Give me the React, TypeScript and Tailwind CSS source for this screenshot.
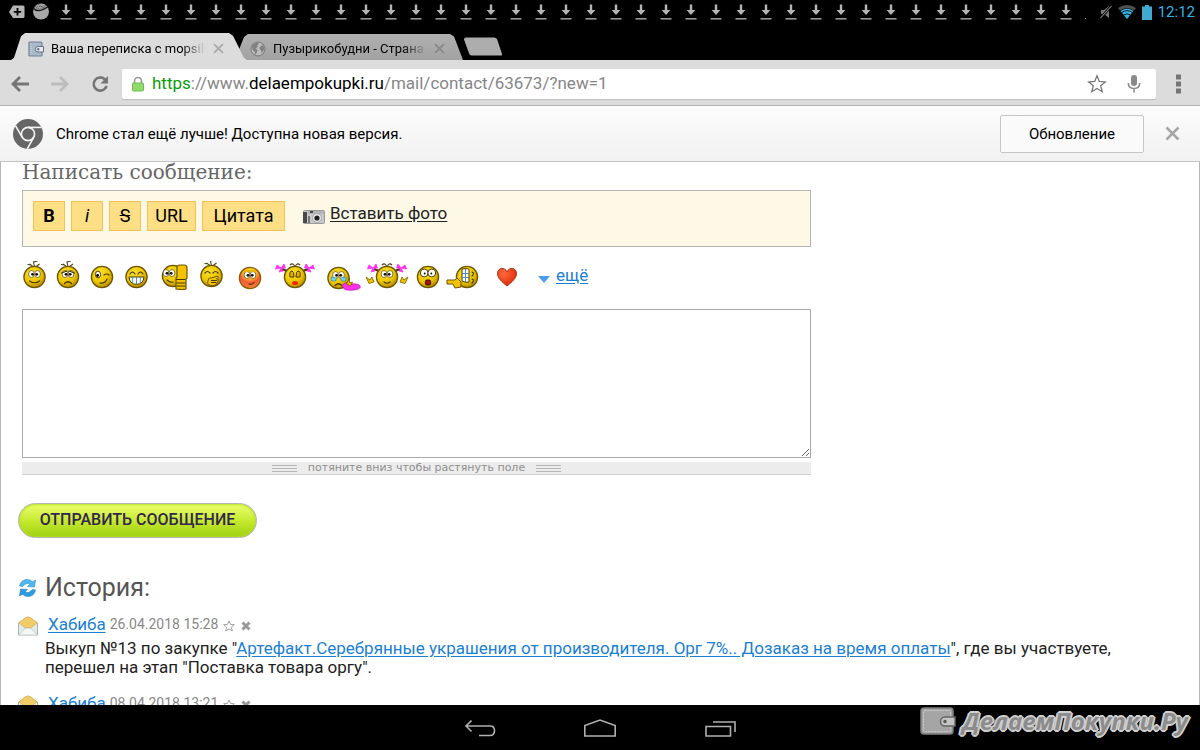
import React from "react";

const BackIcon = ({ flip }: { flip?: boolean }) => (
  <svg width="20" height="20" viewBox="0 0 20 20" className={flip ? "rotate-180" : ""}>
    <path d="M10 3 L3 10 L10 17 M3 10 H19" fill="none" stroke="currentColor" strokeWidth="2.8" />
  </svg>
);

const ReloadIcon = () => (
  <svg width="20" height="20" viewBox="0 0 20 20">
    <path d="M15.2 5.6 A6.6 6.6 0 1 0 16.6 12" fill="none" stroke="#757575" strokeWidth="2.6" />
    <path d="M18 2 V9.5 H10.5 Z" fill="#757575" />
  </svg>
);

const CloseIcon = ({ size, color }: { size: number; color: string }) => (
  <svg width={size} height={size} viewBox="0 0 10 10">
    <path d="M1 1 L9 9 M9 1 L1 9" stroke={color} strokeWidth="1.7" />
  </svg>
);

const DownloadIcon = () => (
  <svg width="25" height="24" viewBox="0 0 25 24" className="shrink-0">
    <path d="M10.8 4.4 H13.2 V10 H16.4 L12 15 L7.6 10 H10.8 Z" fill="#b5b5b5" />
    <path d="M6.5 18.8 H17.5" stroke="#a0a0a0" strokeWidth="1.5" />
  </svg>
);

const WalletIcon = () => (
  <svg width="16" height="16" viewBox="0 0 16 16">
    <path d="M1 2 Q1 1 2 1 H13 Q14 1 14 2 V14 Q14 15 13 15 H2 Q1 15 1 14 Z" fill="#a9b9c8" stroke="#6f8295" strokeWidth="1.2" />
    <path d="M3 3 V13" stroke="#d3dde6" strokeDasharray="1 1" />
    <path d="M15.5 5.5 H10 A2.7 2.7 0 0 0 10 11 H15.5 Z" fill="#e6ebf0" stroke="#5f7285" />
    <circle cx="10.2" cy="8.2" r="1.2" fill="#5f7285" />
  </svg>
);

const GlobeIcon = () => (
  <svg width="16" height="16" viewBox="0 0 16 16">
    <circle cx="8" cy="8" r="7" fill="#bcbcbc" stroke="#777" strokeWidth="1" />
    <path d="M2 5 Q4 2 8 1.5 L9 3 L7 4 L8 5.5 L5.5 7.5 L7.5 9 L7 11 L5.5 14 L4.5 10.5 L2.5 8.5 Z" fill="#808080" />
    <path d="M11 3 L14 5.5 L14.5 8 L13 10.5 L11.5 12 L11 9 L9.5 8 L10 5.5 L12 5 Z" fill="#808080" />
  </svg>
);

const ChromeIcon = () => (
  <svg width="30" height="30" viewBox="0 0 30 30">
    <circle cx="15" cy="15" r="15" fill="#666" />
    <g fill="none" stroke="#f5f5f5" strokeWidth="1.6">
      <circle cx="15" cy="15" r="6.6" />
      <path d="M15 8.4 H28.6" />
      <path d="M9.3 18.3 L2.6 6.8" />
      <path d="M20.7 18.3 L14.2 30" />
    </g>
  </svg>
);

const CameraIcon = () => (
  <svg width="22" height="16" viewBox="0 0 22 16">
    <rect x="0.5" y="1.5" width="21" height="13" rx="1" fill="#c9c9c9" stroke="#9a9a9a" />
    <rect x="0" y="3" width="4" height="11" fill="#4a4a4a" />
    <rect x="5" y="2" width="16" height="3" fill="#b5b5b5" />
    <rect x="7" y="2" width="3" height="2" fill="#444" />
    <rect x="5" y="7" width="2" height="7" fill="#777" />
    <circle cx="14" cy="9" r="4.4" fill="#ededed" stroke="#aaa" />
    <circle cx="14" cy="9" r="2.6" fill="#222" />
  </svg>
);

const Hair = () => (
  <path d="M-1 -10 L-5 -13 M0 -10 L-1 -15 L3 -16 M1 -10 L5 -13 M-7 -12.5 L-3 -12" fill="none" stroke="#4a4020" strokeWidth="1.1" />
);

const Face = ({ y = 0 }: { y?: number }) => (
  <circle cx="0" cy={y} r="10.6" fill="url(#face)" stroke="#6d5600" strokeWidth="1.3" />
);

const Eyes = ({ y = -3 }: { y?: number }) => (
  <g>
    <ellipse cx="-3" cy={y} rx="2.9" ry="3.5" fill="#fff" stroke="#6b5a20" strokeWidth="0.8" />
    <ellipse cx="3" cy={y} rx="2.9" ry="3.5" fill="#fff" stroke="#6b5a20" strokeWidth="0.8" />
    <circle cx="-2" cy={y + 0.3} r="1.4" fill="#111" />
    <circle cx="2.2" cy={y + 0.3} r="1.4" fill="#111" />
  </g>
);

const Bows = () => (
  <g>
    <path d="M-8 -6 L-13 -8 M8 -6 L13 -8" stroke="#4a3210" strokeWidth="2.4" />
    <path d="M-14 -9 L-18 -12 L-19.5 -8 Z M-14 -9 L-11 -13 L-9.5 -9 Z M-14 -9 L-16 -5 L-12 -6 Z M14 -9 L18 -12 L19.5 -8 Z M14 -9 L11 -13 L9.5 -9 Z M14 -9 L16 -5 L12 -6 Z" fill="#ff30f0" stroke="#ff30f0" strokeWidth="0.8" />
    <path d="M-5 -12 Q-2 -15 0 -10 Q2 -15 5 -12" fill="none" stroke="#4a3a18" strokeWidth="1.2" />
  </g>
);

const line = { fill: "none", stroke: "#4a3a00", strokeWidth: 1.2, strokeLinecap: "round" as const };

const smileys = [
  {
    name: "улыбка",
    width: 33,
    art: (<><Hair /><Face /><Eyes /><path d="M-5 4 Q0 7.5 5 4" {...line} /></>),
  },
  {
    name: "грусть",
    width: 34,
    art: (<><Hair /><Face /><Eyes /><path d="M-6.5 -4 L-1 -6 M6.5 -4 L1 -6" {...line} /><path d="M-3.5 6.5 Q0 3 3.5 6.5" {...line} /></>),
  },
  {
    name: "подмигивание",
    width: 34,
    art: (
      <>
        <Face />
        <ellipse cx="-4" cy="-2.5" rx="2.6" ry="3.4" fill="#fff" stroke="#554400" />
        <circle cx="-4.4" cy="-1.5" r="1.4" />
        <path d="M2 -2 Q5 -4 7 -2 M-2 6 Q3 7 5 2" {...line} />
      </>
    ),
  },
  {
    name: "смех",
    width: 35,
    art: (
      <>
        <Face />
        <path d="M-6.5 -3 Q-4 -7 -1.5 -3 M1.5 -3 Q4 -7 6.5 -3" {...line} />
        <path d="M-7.5 0 H7.5 Q7 7 0 7.4 Q-7 7 -7.5 0 Z" fill="#fff" stroke="#4a3a00" />
        <path d="M-3.8 0 V6.5 M0 0 V7 M3.8 0 V6.5" stroke="#3c83b8" strokeWidth="0.9" />
      </>
    ),
  },
  {
    name: "класс",
    width: 40,
    art: (
      <>
        <g transform="translate(-1 -1)"><Face /><g transform="translate(-4 0)"><Eyes /></g><path d="M-6 4 Q-3 7 0 6" {...line} /></g>
        <path d="M3 -10 Q3 -12 6 -12 H10 Q13 -12 13 -9 V1 L12 2 V12 Q8 13 2 12 V1 L3 0 Z" fill="#f3c200" stroke="#6d5600" strokeWidth="1.2" />
        <path d="M2.5 2.5 H11 M3 6 H11 M3 9 H11" {...line} />
      </>
    ),
  },
  {
    name: "хихиканье",
    width: 35,
    art: (
      <>
        <g transform="translate(0 -1)"><Hair /><Face /></g>
        <path d="M-6.5 -4 Q-4 -7 -1.5 -4 M1.5 -4 Q4 -7 6.5 -4" {...line} />
        <path d="M-3 2 Q-2 0 0 1 L6 -1 Q8 0 5 2 L7 2.5 L6 5 L4 8 Q-2 10 -4 6 Z" fill="#f3c200" stroke="#6d5600" />
        <path d="M0 3.5 H5 M0 5.5 H4" {...line} />
      </>
    ),
  },
  {
    name: "смущение",
    width: 42,
    art: (
      <>
        <circle cx="0" cy="1" r="10.6" fill="url(#blush)" stroke="#8a5a00" strokeWidth="1.3" />
        <Eyes y={-2} />
        <path d="M-6 -5.5 Q0 -7 6 -5.5" fill="none" stroke="#e8b400" strokeWidth="1.8" />
        <path d="M-1 7 Q2 8 4 5.5" {...line} />
      </>
    ),
  },
  {
    name: "поцелуй",
    width: 48,
    art: (
      <>
        <Bows />
        <Face />
        <path d="M-5 0 Q-6 -6 -3 -6 Q-1 -6 -1 0 Z M1 0 Q1 -6 3 -6 Q6 -6 5 0 Z" fill="#e0ad00" stroke="#4a3a00" />
        <ellipse cx="0" cy="6" rx="3" ry="2.1" fill="#ff2200" />
      </>
    ),
  },
  {
    name: "плач",
    width: 45,
    art: (
      <>
        <g transform="translate(-3 1)">
          <Face />
          <Eyes />
          <path d="M-7.5 -1 L-7 3 L-3 3 L-2 0 L-4.5 -0.5 Z M2 0 L3 3 L7 3 L7.5 -1 L4.5 -0.5 Z" fill="#6fd3f5" stroke="#3a7f98" strokeWidth="0.6" />
          <path d="M-3.5 7.5 Q0 4 3.5 7.5" {...line} />
        </g>
        <path d="M1 8 Q5 4 9 7 Q18 6 19 10 Q17 14 5 13 Q1 12 1 8 Z" fill="#ff30e8" stroke="#c010b8" strokeWidth="0.7" />
        <path d="M5 7 L8 1 L8 6 L11 5 L9 9 Z" fill="#f3c200" stroke="#6d5600" strokeWidth="0.8" />
      </>
    ),
  },
  {
    name: "девочка",
    width: 46,
    art: (
      <>
        <Bows />
        <Face />
        <Eyes />
        <path d="M-3 5 Q0 7.5 3 5" {...line} />
        <path d="M-21 0 L-17 3 L-15 0 L-13 5 L-18 6.5 Z M21 0 L17 3 L15 0 L13 5 L18 6.5 Z" fill="#f3c200" stroke="#8d6c00" strokeWidth="0.9" />
      </>
    ),
  },
  {
    name: "шок",
    width: 36,
    art: (
      <>
        <Face />
        <circle cx="-3.8" cy="-4" r="3.9" fill="#fff" stroke="#554400" />
        <circle cx="3.8" cy="-4" r="3.9" fill="#fff" stroke="#554400" />
        <circle cx="-3.3" cy="-3.5" r="0.9" />
        <circle cx="3.3" cy="-3.5" r="0.9" />
        <rect x="-2.6" y="3" width="5.2" height="5" rx="1.5" fill="#a31200" stroke="#3c1000" />
      </>
    ),
  },
  {
    name: "хохот",
    width: 34,
    art: (
      <>
        <g transform="translate(4 0)">
          <Face />
          <path d="M-5 -8 Q2 -9 2 -7 V5 Q-1 6 -5 4 Z" fill="#fff" stroke="#4a3a00" />
          <path d="M-5 -3.5 H2 M-5 0.5 H2 M-1.5 -8 V5" stroke="#3c83b8" strokeWidth="0.9" />
          <path d="M5 -5 Q8 -4 5 -1 M5 2 Q8 3 5 6" {...line} />
        </g>
        <path d="M-16 3 H-8 L-6 1 L-2 5 V10 L-8 11 L-10 7 H-16 Z" fill="#f3c200" stroke="#6d5600" />
      </>
    ),
  },
  {
    name: "сердце",
    width: 54,
    art: (
      <path d="M0 9 C-5 5 -9.5 1 -9.5 -3.5 C-9.5 -9.5 -2 -10.5 0 -5 C2 -10.5 9.5 -9.5 9.5 -3.5 C9.5 1 5 5 0 9 Z" fill="url(#heart)" stroke="#a3341a" strokeWidth="1" />
    ),
  },
];

const messages = [
  {
    author: "Хабиба",
    date: "26.04.2018 15:28",
    before: 'Выкуп №13 по закупке "',
    link: "Артефакт.Серебрянные украшения от производителя. Орг 7%.. Дозаказ на время оплаты",
    after: '", где вы участвуете, перешел на этап "Поставка товара оргу".',
  },
  { author: "Хабиба", date: "08.04.2018 13:21", before: "", link: "", after: "" },
];

const StatusBar = () => (
  <div className="flex h-6 shrink-0 items-center justify-between bg-black pr-[5px]">
    <div className="flex min-w-0 flex-1 overflow-hidden pl-1">
      <svg width="25" height="24" viewBox="0 0 25 24" className="shrink-0">
        <path d="M5 12 L9 5.5 H19 Q20.5 5.5 20.5 7 V16.5 Q20.5 18 19 18 H9 Z" fill="#b5b5b5" />
        <path d="M13.5 8 V15.5 M9.8 11.8 H17.2" stroke="#000" strokeWidth="1.8" />
      </svg>
      <svg width="25" height="24" viewBox="0 0 25 24" className="shrink-0">
        <circle cx="12" cy="11.5" r="8" fill="#a8a8a8" />
        <path d="M4 8 Q9 14 20 6" fill="none" stroke="#111" strokeWidth="1.3" />
        <path d="M6 5 Q11 8 18 5 M5 7 Q11 10 19 6 M9 4 L16 9 M6 6 L12 11" stroke="#333" fill="none" strokeWidth="0.8" strokeDasharray="1 1" />
      </svg>
      {Array.from({ length: 41 }, (_, i) => (
        <DownloadIcon key={i} />
      ))}
      <svg width="12" height="24" viewBox="0 0 12 24" className="shrink-0">
        <rect x="6" y="18" width="1" height="1" fill="#888" />
      </svg>
    </div>
    <div className="flex shrink-0 items-center gap-[6px]">
      <svg width="12" height="16" viewBox="0 0 12 16">
        <path d="M1 6 H4 L9 2 V14 L4 10 H1 Z" fill="#777" />
        <path d="M0 15 L12 1" stroke="#000" strokeWidth="2.6" />
        <path d="M0.5 14 L11.5 2" stroke="#8a8a8a" strokeWidth="1.1" />
      </svg>
      <svg width="18" height="14" viewBox="0 0 18 14">
        <path d="M0 3 Q9 -3 18 3 L16 5.5 Q9 1 2 5.5 Z" fill="#505050" />
        <path d="M2.6 6 Q9 1.5 15.4 6 L9 14 Z" fill="#33b5e5" />
        <path d="M3.5 7.6 Q9 3.8 14.5 7.6 M5.5 10 Q9 7.6 12.5 10" fill="none" stroke="#000" strokeWidth="0.9" />
      </svg>
      <svg width="10" height="15" viewBox="0 0 10 15">
        <path d="M3 0 H7 V1.5 H10 V15 H0 V1.5 H3 Z" fill="#3fa9d0" />
      </svg>
      <span className="text-[15px] leading-6 text-[#33b5e5]">12:12</span>
    </div>
  </div>
);

const TabStrip = () => (
  <div className="flex h-9 shrink-0 items-end bg-black pl-[11px]">
    <div className="z-10 flex h-[27px] w-[236px] items-center bg-[#dcdcdc] pl-[17px] pr-[23px] pt-1 [clip-path:polygon(0_100%,3px_92%,10px_12%,14px_0,218px_0,222px_10%,233px_92%,100%_100%)]">
      <WalletIcon />
      <span className="ml-[7px] flex-1 overflow-hidden whitespace-nowrap text-[13px] text-black [mask-image:linear-gradient(to_right,black_85%,transparent)]">
        Ваша переписка с mopsil
      </span>
      <button aria-label="Закрыть вкладку" className="ml-2">
        <CloseIcon size={11} color="#aaa" />
      </button>
    </div>
    <div className="-ml-3 flex h-[26px] w-[228px] items-center bg-linear-to-b from-[#b0b0b0] to-[#a2a2a2] pl-[15px] pr-[18px] pt-[3px] [clip-path:polygon(0_100%,9px_12%,13px_0,215px_0,219px_10%,100%_100%)]">
      <GlobeIcon />
      <span className="ml-[7px] flex-1 overflow-hidden whitespace-nowrap text-[13px] text-black [mask-image:linear-gradient(to_right,black_85%,transparent)]">
        Пузырикобудни - Страна
      </span>
      <button aria-label="Закрыть вкладку" className="ml-2">
        <CloseIcon size={11} color="#888" />
      </button>
    </div>
    <button aria-label="Новая вкладка" className="mb-1">
      <svg width="40" height="19" viewBox="0 0 40 19">
        <path d="M3 0.5 H31 Q33 0.5 34 2 L39 17 Q39.5 18.5 38 18.5 H9 Q7 18.5 6.3 17 L1 2.5 Q1 0.5 3 0.5 Z" fill="#adadad" />
      </svg>
    </button>
  </div>
);

const AddressBar = () => (
  <div className="flex h-[46px] shrink-0 items-center border-b border-[#b4b4b4] bg-[#dcdcdc] pl-[10px] pr-3 pt-[2px]">
    <button aria-label="Назад" className="text-[#757575]">
      <BackIcon />
    </button>
    <button aria-label="Вперёд" className="ml-5 text-[#bdbdbd]">
      <BackIcon flip />
    </button>
    <button aria-label="Обновить" className="ml-5">
      <ReloadIcon />
    </button>
    <div className="ml-3 flex h-[30px] flex-1 items-center rounded-xs bg-white pl-[10px] pr-3 shadow-[0_1px_1px_#bbb]">
      <svg width="12" height="16" viewBox="0 0 12 16">
        <path d="M2.5 8 V5 A3.5 3.5 0 0 1 9.5 5 V8" fill="none" stroke="#9a9a9a" strokeWidth="1.7" />
        <rect x="0.5" y="7" width="11" height="8" rx="1" fill="#8fdb6c" stroke="#70bb54" />
      </svg>
      <a href="#" className="ml-2 flex-1 truncate text-[17px] text-[#868686]">
        <span className="text-[#0b9a0b]">https</span>://www.<span className="text-black">delaempokupki.ru</span>/mail/contact/63673/?new=1
      </a>
      <button aria-label="В закладки">
        <svg width="20" height="20" viewBox="0 0 20 20">
          <path d="M10 1.8 L12.3 7.4 L18.3 7.9 L13.7 11.8 L15.2 17.7 L10 14.5 L4.8 17.7 L6.3 11.8 L1.7 7.9 L7.7 7.4 Z" fill="none" stroke="#757575" strokeWidth="1.3" />
        </svg>
      </button>
      <button aria-label="Голосовой поиск" className="ml-[17px]">
        <svg width="20" height="20" viewBox="0 0 20 20">
          <rect x="7" y="1" width="6" height="11" rx="3" fill="#8a8a8a" />
          <path d="M4.3 9 Q4.3 14.5 10 14.5 Q15.7 14.5 15.7 9 M10 14.5 V18.5" fill="none" stroke="#8a8a8a" strokeWidth="1.5" />
        </svg>
      </button>
    </div>
    <button aria-label="Меню" className="ml-[14px]">
      <svg width="18" height="20" viewBox="0 0 18 20">
        <path d="M6 0.5 h5 v5 h-5 Z M6 7.5 h5 v5 h-5 Z M6 14.5 h5 v5 h-5 Z" fill="#757575" />
      </svg>
    </button>
  </div>
);

const UpdateBar = () => (
  <div className="flex h-14 shrink-0 items-center border-b border-[#c4c4c4] bg-linear-to-b from-[#fcfcfc] to-[#f1f1f1] pl-[13px] pr-5">
    <ChromeIcon />
    <span className="ml-[13px] flex-1 pt-[2px] text-[15px] text-black">Chrome стал ещё лучше! Доступна новая версия.</span>
    <button className="h-[38px] w-36 rounded-xs border border-[#c6c6c6] bg-[#fafafa] pt-[2px] text-[15px] text-black">
      Обновление
    </button>
    <button aria-label="Закрыть" className="ml-[21px]">
      <CloseIcon size={15} color="#a5a5a5" />
    </button>
  </div>
);

const MessageForm = () => (
  <form onSubmit={(e) => e.preventDefault()}>
    <div className="ml-1 w-[67%] max-w-[789px] min-w-[600px]">
      <label htmlFor="message" className="mb-2 block font-[DejaVu_Serif,serif] text-[20px] leading-5 text-[#666]">
        Написать сообщение:
      </label>
      <div className="flex h-[57px] items-start gap-[6px] border border-[#b5b5b5] bg-[#fef8e7] p-[10px] text-[18px] leading-7 text-black">
        <button type="button" className="h-[30px] w-8 border border-[#f0c356] bg-[#fedf85] font-bold">B</button>
        <button type="button" className="h-[30px] w-8 border border-[#f0c356] bg-[#fedf85] italic">i</button>
        <button type="button" className="h-[30px] w-8 border border-[#f0c356] bg-[#fedf85] line-through">S</button>
        <button type="button" className="h-[30px] w-[49px] border border-[#f0c356] bg-[#fedf85]">URL</button>
        <button type="button" className="h-[30px] w-[83px] border border-[#f0c356] bg-[#fedf85]">Цитата</button>
        <a href="#" className="ml-3 flex items-end gap-[5px] text-[17px] leading-6 text-[#222]">
          <CameraIcon />
          <span className="underline underline-offset-2">Вставить фото</span>
        </a>
      </div>
    </div>
    <div className="mt-[14px] flex h-8 items-center">
      {smileys.map((s) => (
        <button key={s.name} type="button" aria-label={s.name} className="shrink-0">
          <svg width={s.width} height="32" viewBox={`${-s.width / 2} -16 ${s.width} 32`}>
            {s.art}
          </svg>
        </button>
      ))}
      <button type="button" className="mb-1 ml-1 flex items-center gap-[6px] text-[17px] leading-6 text-[#1b80d3]">
        <svg width="12" height="7" viewBox="0 0 12 7" className="mt-2">
          <path d="M0 0 H12 L6 7 Z" fill="#4a9df0" />
        </svg>
        <span className="underline underline-offset-2">ещё</span>
      </button>
    </div>
    <div className="ml-1 w-[67%] max-w-[789px] min-w-[600px]">
      <textarea id="message" className="mt-4 block h-[149px] w-full border border-[#aaa] bg-white" />
      <div className="mt-1 flex h-[13px] items-center justify-center gap-[11px] border-b border-[#d0d0d0] bg-[#ececec] font-[DejaVu_Sans,sans-serif] text-[11px] leading-3 text-[#8f8f8f]">
        <span className="h-[7px] w-[25px] border-y border-[#b5b5b5] py-[2px]"><span className="block h-px bg-[#b5b5b5]" /></span>
        потяните вниз чтобы растянуть поле
        <span className="h-[7px] w-[25px] border-y border-[#b5b5b5] py-[2px]"><span className="block h-px bg-[#b5b5b5]" /></span>
      </div>
    </div>
    <button
      type="submit"
      className="mt-7 block h-[35px] w-[239px] rounded-full border border-[#b5b5b5] bg-linear-to-b from-[#ecff6c] via-[#c6ea2e] to-[#9fd00f] pb-[2px] text-[16px] font-medium text-[#33264f] shadow-[inset_0_0_2px_1px_#b5e022]"
    >
      ОТПРАВИТЬ СООБЩЕНИЕ
    </button>
  </form>
);

const History = () => (
  <section>
    <h2 className="mt-[34px] flex items-center gap-2 text-[25px] leading-8 text-[#555]">
      <svg width="19" height="20" viewBox="0 0 19 20">
        <path d="M1.5 8 Q3 1.5 9 1.5 Q12.5 1.5 14.5 3.8 L17.5 2 L16.5 9 L9.5 8.5 L12 6.3 Q8 4 4.8 8.5 Z" fill="#52b7ee" stroke="#2a90d0" strokeWidth="0.6" />
        <path d="M17.5 12 Q16 18.5 10 18.5 Q6.5 18.5 4.5 16.2 L1.5 18 L2.5 11 L9.5 11.5 L7 13.7 Q11 16 14.2 11.5 Z" fill="#2e9be0" stroke="#2382c4" strokeWidth="0.6" />
      </svg>
      История:
    </h2>
    {messages.map((m) => (
      <article key={m.date} className="mb-[13px] first-of-type:mt-[7px]">
        <div className="mb-[2px] flex h-[26px] items-center">
          <svg width="20" height="20" viewBox="0 0 20 20" className="mt-1">
            <path d="M0.5 7 L10 1 L19.5 7 V19 H0.5 Z" fill="#e3ece8" stroke="#a9b3ae" />
            <path d="M1 7 L7 2 Q10 0 13 2 L19 7 L13 11.5 H7 Z" fill="#f3cc6a" stroke="#dcae4c" strokeWidth="0.8" />
            <path d="M1 18.5 L7.5 12 H12.5 L19 18.5" fill="#f3f8f6" stroke="#b4c2bc" strokeWidth="0.8" />
          </svg>
          <a href="#" className="ml-[10px] text-[17px] leading-6 text-[#1b80d3] underline underline-offset-2">{m.author}</a>
          <span className="ml-1 text-[14px] leading-6 text-[#888]">{m.date}</span>
          <button aria-label="В избранное" className="ml-[5px] mt-1">
            <svg width="12" height="12" viewBox="0 0 12 12">
              <path d="M6 1 L7.5 4.4 L11.3 4.7 L8.4 7.2 L9.3 11 L6 9 L2.7 11 L3.6 7.2 L0.7 4.7 L4.5 4.4 Z" fill="none" stroke="#999" strokeWidth="0.9" />
            </svg>
          </button>
          <button aria-label="Удалить" className="ml-[6px] mt-1">
            <svg width="10" height="10" viewBox="0 0 10 10">
              <path d="M1.5 1.5 L8.5 8.5 M8.5 1.5 L1.5 8.5" stroke="#999" strokeWidth="3" />
            </svg>
          </button>
        </div>
        <p className="ml-[27px] mr-12 text-[17px] leading-[19px] text-[#222]">
          {m.before}
          <a href="#" className="text-[#1b80d3] underline underline-offset-2">{m.link}</a>
          {m.after}
        </p>
      </article>
    ))}
  </section>
);

const NavBar = () => (
  <nav className="relative flex h-[45px] shrink-0 items-center justify-center gap-[88px] bg-black pt-[2px]">
    <button aria-label="Назад">
      <svg width="32" height="20" viewBox="0 0 32 20" fill="none" stroke="#b0b0b0" strokeWidth="1.6">
        <path d="M7.5 1.5 L2 7 L7.5 12.5 M2 7 H26 Q30.5 7 30.5 11.5 Q30.5 16.5 26 16.5 H15" />
      </svg>
    </button>
    <button aria-label="Домой">
      <svg width="32" height="20" viewBox="0 0 32 20" fill="none" stroke="#b0b0b0" strokeWidth="1.6">
        <path d="M0.8 17 V6.5 L16 1 L31.2 6.5 V17 Z" />
      </svg>
    </button>
    <button aria-label="Недавние">
      <svg width="32" height="20" viewBox="0 0 32 20" fill="none" stroke="#b0b0b0" strokeWidth="1.6">
        <path d="M2 7.5 H26.5 V17 H2 Z M9 3 H31 V13" />
      </svg>
    </button>
    <div className="absolute right-3 top-0 flex items-center gap-[7px]">
      <svg width="36" height="30" viewBox="0 0 36 30">
        <rect x="1" y="2" width="32" height="26" rx="3" fill="#a5a5a5" stroke="#7c7c7c" strokeWidth="1.5" />
        <rect x="3.5" y="4.5" width="27" height="21" rx="1" fill="none" stroke="#c9c9c9" strokeDasharray="2 1" />
        <path d="M35 11 H25 A4.5 4.5 0 0 0 25 20 H35 Z" fill="#c4c4c4" stroke="#666" strokeWidth="1.5" />
        <circle cx="25" cy="15.5" r="1.7" fill="#555" />
      </svg>
      <span className="font-[Open_Sans,sans-serif] text-[24px] font-bold italic leading-8 text-[#8c8c8c] [text-shadow:2px_0_#cfcfcf,-2px_0_#cfcfcf,0_2px_#cfcfcf,0_-2px_#cfcfcf,1px_1px_#cfcfcf,-1px_-1px_#cfcfcf,1px_-1px_#cfcfcf,-1px_1px_#cfcfcf]">
        ДелаемПокупки.Ру
      </span>
    </div>
  </nav>
);

const App = () => {
  return (
    <div className="flex h-screen flex-col overflow-hidden bg-white font-[Roboto,sans-serif]">
      <svg width="0" height="0" className="absolute">
        <defs>
          <radialGradient id="face" cx="0.38" cy="0.3" r="0.75">
            <stop offset="0" stopColor="#fbe02e" />
            <stop offset="0.6" stopColor="#ecc500" />
            <stop offset="1" stopColor="#b08400" />
          </radialGradient>
          <radialGradient id="blush" cx="0.5" cy="0.2" r="0.8">
            <stop offset="0" stopColor="#ffe52e" />
            <stop offset="0.4" stopColor="#f8b52a" />
            <stop offset="0.65" stopColor="#f5583a" />
            <stop offset="1" stopColor="#f08a30" />
          </radialGradient>
          <radialGradient id="heart" cx="0.35" cy="0.3" r="0.7">
            <stop offset="0" stopColor="#ff6a3a" />
            <stop offset="1" stopColor="#e02c10" />
          </radialGradient>
        </defs>
      </svg>
      <StatusBar />
      <TabStrip />
      <AddressBar />
      <UpdateBar />
      <main className="min-h-0 flex-1 overflow-hidden border-x border-[#b8b8b8] pl-[17px]">
        <MessageForm />
        <History />
      </main>
      <NavBar />
    </div>
  );
};

export default App;
